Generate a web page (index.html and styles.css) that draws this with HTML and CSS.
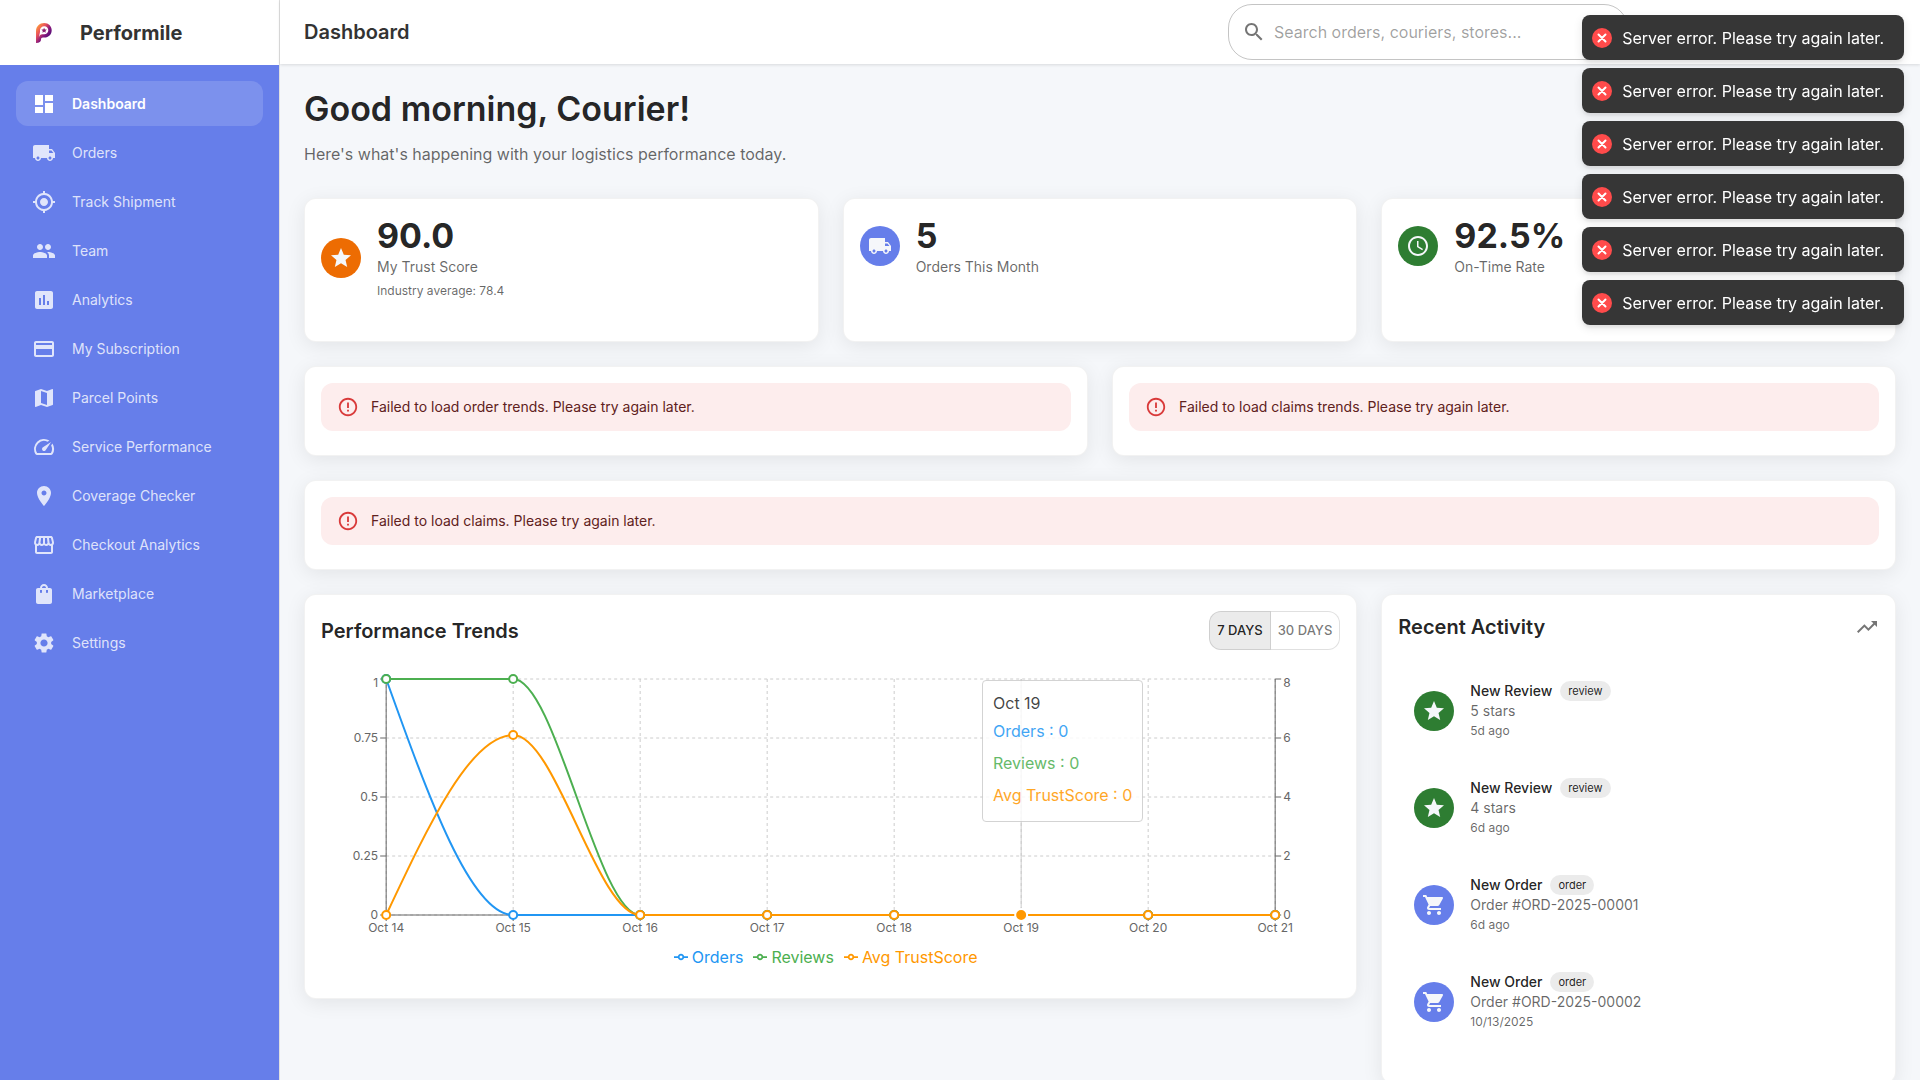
FILE: index.html
```html
<!DOCTYPE html>
<html lang="en">
<head>
<meta charset="utf-8">
<meta name="viewport" content="width=device-width, initial-scale=1">
<title>Performile</title>
<link rel="stylesheet" href="styles.css">
</head>
<body>
<svg class="sprite" aria-hidden="true">
  <symbol id="i-dashboard" viewBox="0 0 24 24"><path d="M3 13h8V3H3v10zm0 8h8v-6H3v6zm10 0h8V11h-8v10zm0-18v6h8V3h-8z"/></symbol>
  <symbol id="i-truck" viewBox="0 0 24 24"><path d="M20 8h-3V4H3c-1.1 0-2 .9-2 2v11h2c0 1.66 1.34 3 3 3s3-1.34 3-3h6c0 1.66 1.34 3 3 3s3-1.34 3-3h2v-5l-3-4zM6 18.5c-.83 0-1.5-.67-1.5-1.5s.67-1.5 1.5-1.5 1.5.67 1.5 1.5-.67 1.5-1.5 1.5zm13.5-9 1.96 2.5H17V9.5h2.5zm-1.5 9c-.83 0-1.5-.67-1.5-1.5s.67-1.5 1.5-1.5 1.5.67 1.5 1.5-.67 1.5-1.5 1.5z"/></symbol>
  <symbol id="i-locate" viewBox="0 0 24 24"><path d="M12 8c-2.21 0-4 1.79-4 4s1.79 4 4 4 4-1.79 4-4-1.79-4-4-4zm8.94 3c-.46-4.17-3.77-7.48-7.94-7.94V1h-2v2.06C6.83 3.52 3.52 6.83 3.06 11H1v2h2.06c.46 4.17 3.77 7.48 7.94 7.94V23h2v-2.06c4.17-.46 7.48-3.77 7.94-7.94H23v-2h-2.06zM12 19c-3.87 0-7-3.13-7-7s3.13-7 7-7 7 3.13 7 7-3.13 7-7 7z"/></symbol>
  <symbol id="i-people" viewBox="0 0 24 24"><path d="M16 11c1.66 0 2.99-1.34 2.99-3S17.66 5 16 5c-1.66 0-3 1.34-3 3s1.34 3 3 3zm-8 0c1.66 0 2.99-1.34 2.99-3S9.66 5 8 5C6.34 5 5 6.34 5 8s1.34 3 3 3zm0 2c-2.33 0-7 1.17-7 3.5V19h14v-2.5c0-2.33-4.67-3.5-7-3.5zm8 0c-.29 0-.62.02-.97.05 1.16.84 1.97 1.97 1.97 3.45V19h6v-2.5c0-2.33-4.67-3.5-7-3.5z"/></symbol>
  <symbol id="i-chart" viewBox="0 0 24 24"><path d="M19 3H5c-1.1 0-2 .9-2 2v14c0 1.1.9 2 2 2h14c1.1 0 2-.9 2-2V5c0-1.1-.9-2-2-2zM9 17H7v-7h2v7zm4 0h-2V7h2v10zm4 0h-2v-4h2v4z"/></symbol>
  <symbol id="i-card" viewBox="0 0 24 24"><path d="M20 4H4c-1.11 0-1.99.89-1.99 2L2 18c0 1.11.89 2 2 2h16c1.11 0 2-.89 2-2V6c0-1.11-.89-2-2-2zm0 14H4v-6h16v6zm0-10H4V6h16v2z"/></symbol>
  <symbol id="i-map" viewBox="0 0 24 24"><path d="m20.5 3-.16.03L15 5.1 9 3 3.36 4.9c-.21.07-.36.25-.36.48V20.5c0 .28.22.5.5.5l.16-.03L9 18.9l6 2.1 5.64-1.9c.21-.07.36-.25.36-.48V3.5c0-.28-.22-.5-.5-.5zM15 19l-6-2.11V5l6 2.11V19z"/></symbol>
  <symbol id="i-speed" viewBox="0 0 24 24"><path d="m20.38 8.57-1.23 1.85a8 8 0 0 1-.22 7.58H5.07A8 8 0 0 1 15.58 6.85l1.85-1.23A10 10 0 0 0 3.35 19a2 2 0 0 0 1.72 1h13.85a2 2 0 0 0 1.74-1 10 10 0 0 0-.27-10.44z"/><path d="M10.59 15.41a2 2 0 0 0 2.83 0l5.66-8.49-8.49 5.66a2 2 0 0 0 0 2.83z"/></symbol>
  <symbol id="i-pin" viewBox="0 0 24 24"><path d="M12 2C8.13 2 5 5.13 5 9c0 5.25 7 13 7 13s7-7.75 7-13c0-3.87-3.13-7-7-7zm0 9.5c-1.38 0-2.5-1.12-2.5-2.5s1.12-2.5 2.5-2.5 2.5 1.12 2.5 2.5-1.12 2.5-2.5 2.5z"/></symbol>
  <symbol id="i-store" viewBox="0 0 24 24"><path d="m21.9 8.89-1.05-4.37c-.22-.9-1-1.52-1.91-1.52H5.05c-.9 0-1.69.63-1.9 1.52L2.1 8.89c-.24 1.02-.02 2.06.62 2.88.08.11.19.19.28.29V19c0 1.1.9 2 2 2h14c1.1 0 2-.9 2-2v-6.94c.09-.09.2-.18.28-.28.64-.82.87-1.87.62-2.89zm-2.99-3.9 1.05 4.37c.1.42.01.84-.25 1.17-.14.18-.44.47-.94.47-.61 0-1.14-.49-1.21-1.14L16.98 5l1.93-.01zM13 5h1.96l.54 4.52c.05.39-.07.78-.33 1.07-.22.26-.54.41-.95.41-.67 0-1.22-.59-1.22-1.31V5zM8.49 9.52 9.04 5H11v4.69c0 .72-.55 1.31-1.29 1.31-.34 0-.65-.15-.89-.41-.25-.29-.37-.68-.33-1.07zm-4.45-.16L5.05 5h1.97l-.58 4.86c-.08.65-.6 1.14-1.21 1.14-.49 0-.8-.29-.93-.47-.27-.32-.36-.75-.26-1.17zM5 19v-6.03c.08.01.15.03.23.03.87 0 1.66-.36 2.24-.95.6.6 1.4.95 2.31.95.87 0 1.65-.36 2.23-.93.59.57 1.39.93 2.29.93.84 0 1.64-.35 2.24-.95.58.59 1.37.95 2.24.95.08 0 .15-.02.23-.03V19H5z"/></symbol>
  <symbol id="i-bag" viewBox="0 0 24 24"><path d="M18 6h-2c0-2.21-1.79-4-4-4S8 3.79 8 6H6c-1.1 0-2 .9-2 2v12c0 1.1.9 2 2 2h12c1.1 0 2-.9 2-2V8c0-1.1-.9-2-2-2zm-8 4c0 .55-.45 1-1 1s-1-.45-1-1V8h2v2zm2-6c1.1 0 2 .9 2 2h-4c0-1.1.9-2 2-2zm4 6c0 .55-.45 1-1 1s-1-.45-1-1V8h2v2z"/></symbol>
  <symbol id="i-gear" viewBox="0 0 24 24"><path d="M19.14 12.94c.04-.3.06-.61.06-.94 0-.32-.02-.64-.07-.94l2.03-1.58c.18-.14.23-.41.12-.61l-1.92-3.32c-.12-.22-.37-.29-.59-.22l-2.39.96c-.5-.38-1.03-.7-1.62-.94l-.36-2.54c-.04-.24-.24-.41-.48-.41h-3.84c-.24 0-.43.17-.47.41l-.36 2.54c-.59.24-1.13.57-1.62.94l-2.39-.96c-.22-.08-.47 0-.59.22L2.74 8.87c-.12.21-.08.47.12.61l2.03 1.58c-.05.3-.09.63-.09.94s.02.64.07.94l-2.03 1.58c-.18.14-.23.41-.12.61l1.92 3.32c.12.22.37.29.59.22l2.39-.96c.5.38 1.03.7 1.62.94l.36 2.54c.05.24.24.41.48.41h3.84c.24 0 .44-.17.47-.41l.36-2.54c.59-.24 1.13-.56 1.62-.94l2.39.96c.22.08.47 0 .59-.22l1.92-3.32c.12-.22.07-.47-.12-.61l-2.01-1.58zM12 15.6c-1.98 0-3.6-1.62-3.6-3.6s1.62-3.6 3.6-3.6 3.6 1.62 3.6 3.6-1.62 3.6-3.6 3.6z"/></symbol>
  <symbol id="i-search" viewBox="0 0 24 24"><path d="M15.5 14h-.79l-.28-.27C15.41 12.59 16 11.11 16 9.5 16 5.91 13.09 3 9.5 3S3 5.91 3 9.5 5.91 16 9.5 16c1.61 0 3.09-.59 4.23-1.57l.27.28v.79l5 4.99L20.49 19l-4.99-5zm-6 0C7.01 14 5 11.99 5 9.5S7.01 5 9.5 5 14 7.01 14 9.5 11.99 14 9.5 14z"/></symbol>
  <symbol id="i-star" viewBox="0 0 24 24"><path d="M12 17.27 18.18 21l-1.64-7.03L22 9.24l-7.19-.61L12 2 9.19 8.63 2 9.24l5.46 4.73L5.82 21z"/></symbol>
  <symbol id="i-clock" viewBox="0 0 24 24"><path d="M11.99 2C6.47 2 2 6.48 2 12s4.47 10 9.99 10C17.52 22 22 17.52 22 12S17.52 2 11.99 2zM12 20c-4.42 0-8-3.58-8-8s3.58-8 8-8 8 3.58 8 8-3.58 8-8 8z"/><path d="M12.5 7H11v6l5.25 3.15.75-1.23-4.5-2.67z"/></symbol>
  <symbol id="i-cart" viewBox="0 0 24 24"><path d="M7 18c-1.1 0-1.99.9-1.99 2S5.9 22 7 22s2-.9 2-2-.9-2-2-2zM1 2v2h2l3.6 7.59-1.35 2.45c-.16.28-.25.61-.25.96 0 1.1.9 2 2 2h12v-2H7.42c-.14 0-.25-.11-.25-.25l.03-.12.9-1.63h7.45c.75 0 1.41-.41 1.75-1.03l3.58-6.49c.08-.14.12-.31.12-.48 0-.55-.45-1-1-1H5.21l-.94-2H1zm16 16c-1.1 0-1.99.9-1.99 2s.89 2 1.99 2 2-.9 2-2-.9-2-2-2z"/></symbol>
  <symbol id="i-trend" viewBox="0 0 24 24"><path d="m16 6 2.29 2.29-4.88 4.88-4-4L2 16.59 3.41 18l6-6 4 4 6.3-6.29L22 12V6z"/></symbol>
  <symbol id="i-error" viewBox="0 0 24 24"><path d="M11 15h2v2h-2zm0-8h2v6h-2zm.99-5C6.47 2 2 6.48 2 12s4.47 10 9.99 10C17.52 22 22 17.52 22 12S17.52 2 11.99 2zM12 20c-4.42 0-8-3.58-8-8s3.58-8 8-8 8 3.58 8 8-3.58 8-8 8z"/></symbol>
  <symbol id="i-cross" viewBox="0 0 20 20"><circle cx="10" cy="10" r="10" fill="#ff4b4b"/><path d="M6.5 6.5l7 7M13.500 6.500l-7 7" fill="none" stroke="#fff" stroke-width="2" stroke-linecap="round"/></symbol>
  <symbol id="i-legend" viewBox="0 0 32 32"><path fill="none" stroke="currentColor" stroke-width="4" d="M0 16h10.67A5.33 5.33 0 1 1 21.33 16H32M21.33 16A5.33 5.33 0 1 1 10.67 16"/></symbol>
</svg>

<div class="app">
  <aside class="sidebar">
    <div class="brand">
      <svg class="brand-logo" viewBox="0 0 24 24" aria-hidden="true">
        <defs><linearGradient id="logo-fill" x1="0.1" y1="0.1" x2="0.8" y2="0.8">
          <stop offset="0" stop-color="#ff9a3c"/><stop offset="0.35" stop-color="#e8505b"/><stop offset="0.65" stop-color="#8a1a7c"/><stop offset="1" stop-color="#4a0a78"/>
        </linearGradient></defs>
        <path fill="url(#logo-fill)" d="M12.200 2C16.500 2 19.700 5.200 19.700 9.200c0 4.300-3.200 7.300-7.200 7.300H11c-1.300 0-2 .8-2 2C9 20.500 7.500 22 4 22V10.200C4 5.300 7.700 2 12.200 2z"/>
        <path fill="#fff" d="M12.300 5.300c2.400 0 4 1.800 4 4s-1.700 4-4 4h-2C8.500 13.300 7.700 14.400 6.700 16.500c.6-2 .9-3.300 1.300-5.400V9.300c0-2.200 1.900-4 4.300-4z"/>
        <path fill="#8a1a6c" d="m12.100 6.700.8 1.700 1.900.2-1.400 1.300.4 1.900-1.700-1-1.700 1 .4-1.900-1.400-1.300 1.900-.2z"/>
      </svg>
      <span class="brand-name">Performile</span>
    </div>
    <nav class="nav" aria-label="Main">
      <a class="nav-item is-active" href="#dashboard"><svg class="icon"><use href="#i-dashboard"/></svg>Dashboard</a>
      <a class="nav-item" href="#orders"><svg class="icon"><use href="#i-truck"/></svg>Orders</a>
      <a class="nav-item" href="#track"><svg class="icon"><use href="#i-locate"/></svg>Track Shipment</a>
      <a class="nav-item" href="#team"><svg class="icon"><use href="#i-people"/></svg>Team</a>
      <a class="nav-item" href="#analytics"><svg class="icon"><use href="#i-chart"/></svg>Analytics</a>
      <a class="nav-item" href="#subscription"><svg class="icon"><use href="#i-card"/></svg>My Subscription</a>
      <a class="nav-item" href="#parcel-points"><svg class="icon"><use href="#i-map"/></svg>Parcel Points</a>
      <a class="nav-item" href="#service"><svg class="icon"><use href="#i-speed"/></svg>Service Performance</a>
      <a class="nav-item" href="#coverage"><svg class="icon"><use href="#i-pin"/></svg>Coverage Checker</a>
      <a class="nav-item" href="#checkout"><svg class="icon"><use href="#i-store"/></svg>Checkout Analytics</a>
      <a class="nav-item" href="#marketplace"><svg class="icon"><use href="#i-bag"/></svg>Marketplace</a>
      <a class="nav-item" href="#settings"><svg class="icon"><use href="#i-gear"/></svg>Settings</a>
    </nav>
  </aside>

  <div class="page">
    <header class="topbar">
      <div class="topbar-title">Dashboard</div>
      <label class="search">
        <svg class="icon"><use href="#i-search"/></svg>
        <input class="search-input" type="search" placeholder="Search orders, couriers, stores..." aria-label="Search">
      </label>
    </header>

    <main class="content">
      <div class="greeting">
        <h1 class="greeting-title">Good morning, Courier!</h1>
        <p class="greeting-text">Here's what's happening with your logistics performance today.</p>
      </div>

      <div class="grid">
        <section class="card stat">
          <div class="stat-row">
            <span class="avatar avatar-orange"><svg class="icon"><use href="#i-star"/></svg></span>
            <div>
              <div class="stat-value">90.0</div>
              <div class="stat-label">My Trust Score</div>
              <div class="stat-note">Industry average: 78.4</div>
            </div>
          </div>
        </section>
        <section class="card stat">
          <div class="stat-row">
            <span class="avatar avatar-blue"><svg class="icon"><use href="#i-truck"/></svg></span>
            <div>
              <div class="stat-value">5</div>
              <div class="stat-label">Orders This Month</div>
            </div>
          </div>
        </section>
        <section class="card stat">
          <div class="stat-row">
            <span class="avatar avatar-green"><svg class="icon"><use href="#i-clock"/></svg></span>
            <div>
              <div class="stat-value">92.5%</div>
              <div class="stat-label">On-Time Rate</div>
            </div>
          </div>
        </section>
      </div>

      <div class="grid grid-halves">
        <section class="card"><div class="alert" role="alert"><svg class="alert-icon"><use href="#i-error"/></svg>Failed to load order trends. Please try again later.</div></section>
        <section class="card"><div class="alert" role="alert"><svg class="alert-icon"><use href="#i-error"/></svg>Failed to load claims trends. Please try again later.</div></section>
      </div>

      <section class="card"><div class="alert" role="alert"><svg class="alert-icon"><use href="#i-error"/></svg>Failed to load claims. Please try again later.</div></section>

      <div class="grid grid-bottom">
        <section class="card trends">
          <div class="trends-head">
            <h2 class="card-title">Performance Trends</h2>
            <div class="toggle" role="group" aria-label="Period">
              <button class="toggle-btn is-selected" type="button" aria-pressed="true">7 DAYS</button>
              <button class="toggle-btn" type="button" aria-pressed="false">30 DAYS</button>
            </div>
          </div>
          <div class="chart">
            <svg class="chart-plot" viewBox="0 0 1019 271" role="img" aria-label="Performance trends">
              <path class="grid-line" d="M65 5H954M65 64H954M65 123H954M65 182H954M65 241H954"/>
              <path class="grid-line" d="M65 5V241M192 5V241M319 5V241M446 5V241M573 5V241M700 5V241M827 5V241M954 5V241"/>
              <path class="axis" d="M65 241H954M65 241v6M192 241v6M319 241v6M446 241v6M573 241v6M700 241v6M827 241v6M954 241v6"/>
              <path class="axis" d="M65 5V241M59 5h6M59 64h6M59 123h6M59 182h6M59 241h6"/>
              <path class="axis" d="M954 5V241M954 5h6M954 64h6M954 123h6M954 182h6M954 241h6"/>
              <g class="tick tick-end">
                <text x="57" y="13">1</text><text x="57" y="68">0.75</text><text x="57" y="127">0.5</text><text x="57" y="186">0.25</text><text x="57" y="245">0</text>
              </g>
              <g class="tick">
                <text x="962" y="13">8</text><text x="962" y="68">6</text><text x="962" y="127">4</text><text x="962" y="186">2</text><text x="962" y="245">0</text>
              </g>
              <g class="tick tick-middle">
                <text x="65" y="258">Oct 14</text><text x="192" y="258">Oct 15</text><text x="319" y="258">Oct 16</text><text x="446" y="258">Oct 17</text><text x="573" y="258">Oct 18</text><text x="700" y="258">Oct 19</text><text x="827" y="258">Oct 20</text><text x="954" y="258">Oct 21</text>
              </g>
              <path class="cursor" d="M700 5V241"/>
              <g class="series series-orders">
                <path d="M65 5C107.300 123 149.700 241 192 241H954"/>
                <circle cx="65" cy="5" r="4"/><circle cx="192" cy="241" r="4"/><circle cx="319" cy="241" r="4"/><circle cx="446" cy="241" r="4"/><circle cx="573" cy="241" r="4"/><circle cx="827" cy="241" r="4"/><circle cx="954" cy="241" r="4"/>
              </g>
              <g class="series series-reviews">
                <path d="M65 5H192C234.300 5 276.700 241 319 241H954"/>
                <circle cx="65" cy="5" r="4"/><circle cx="192" cy="5" r="4"/><circle cx="319" cy="241" r="4"/><circle cx="446" cy="241" r="4"/><circle cx="573" cy="241" r="4"/><circle cx="827" cy="241" r="4"/><circle cx="954" cy="241" r="4"/>
              </g>
              <g class="series series-trust">
                <path d="M65 241C107.300 151 149.700 61 192 61C234.300 61 276.700 241 319 241H954"/>
                <circle cx="65" cy="241" r="4"/><circle cx="192" cy="61" r="4"/><circle cx="319" cy="241" r="4"/><circle cx="446" cy="241" r="4"/><circle cx="573" cy="241" r="4"/><circle cx="827" cy="241" r="4"/><circle cx="954" cy="241" r="4"/>
              </g>
              <circle class="active-dot" cx="700" cy="241" r="6"/>
            </svg>
            <ul class="legend">
              <li class="legend-item color-orders"><svg class="legend-icon"><use href="#i-legend"/></svg>Orders</li>
              <li class="legend-item color-reviews"><svg class="legend-icon"><use href="#i-legend"/></svg>Reviews</li>
              <li class="legend-item color-trust"><svg class="legend-icon"><use href="#i-legend"/></svg>Avg TrustScore</li>
            </ul>
            <div class="tooltip" role="tooltip">
              <p class="tooltip-label">Oct 19</p>
              <ul class="tooltip-list">
                <li class="tooltip-item color-orders">Orders : 0</li>
                <li class="tooltip-item color-reviews">Reviews : 0</li>
                <li class="tooltip-item color-trust">Avg TrustScore : 0</li>
              </ul>
            </div>
          </div>
        </section>

        <section class="card activity">
          <div class="activity-head">
            <h2 class="card-title">Recent Activity</h2>
            <svg class="icon"><use href="#i-trend"/></svg>
          </div>
          <ul class="activity-list">
            <li class="activity-item">
              <span class="avatar avatar-green"><svg class="icon"><use href="#i-star"/></svg></span>
              <div>
                <div class="activity-title">New Review<span class="chip">review</span></div>
                <div class="activity-text">5 stars</div>
                <div class="activity-time">5d ago</div>
              </div>
            </li>
            <li class="activity-item">
              <span class="avatar avatar-green"><svg class="icon"><use href="#i-star"/></svg></span>
              <div>
                <div class="activity-title">New Review<span class="chip">review</span></div>
                <div class="activity-text">4 stars</div>
                <div class="activity-time">6d ago</div>
              </div>
            </li>
            <li class="activity-item">
              <span class="avatar avatar-blue"><svg class="icon"><use href="#i-cart"/></svg></span>
              <div>
                <div class="activity-title">New Order<span class="chip">order</span></div>
                <div class="activity-text">Order #ORD-2025-00001</div>
                <div class="activity-time">6d ago</div>
              </div>
            </li>
            <li class="activity-item">
              <span class="avatar avatar-blue"><svg class="icon"><use href="#i-cart"/></svg></span>
              <div>
                <div class="activity-title">New Order<span class="chip">order</span></div>
                <div class="activity-text">Order #ORD-2025-00002</div>
                <div class="activity-time">10/13/2025</div>
              </div>
            </li>
          </ul>
        </section>
      </div>
    </main>
  </div>
</div>

<div class="toasts" aria-live="polite">
  <div class="toast"><svg class="toast-icon"><use href="#i-cross"/></svg>Server error. Please try again later.</div>
  <div class="toast"><svg class="toast-icon"><use href="#i-cross"/></svg>Server error. Please try again later.</div>
  <div class="toast"><svg class="toast-icon"><use href="#i-cross"/></svg>Server error. Please try again later.</div>
  <div class="toast"><svg class="toast-icon"><use href="#i-cross"/></svg>Server error. Please try again later.</div>
  <div class="toast"><svg class="toast-icon"><use href="#i-cross"/></svg>Server error. Please try again later.</div>
  <div class="toast"><svg class="toast-icon"><use href="#i-cross"/></svg>Server error. Please try again later.</div>
</div>
</body>
</html>
```

FILE: styles.css
```css
:root {
  --primary: #667eea;
  --surface: #f5f7fa;
  --text: rgba(0, 0, 0, 0.87);
  --muted: rgba(0, 0, 0, 0.6);
  --orders: #2196f3;
  --reviews: #4caf50;
  --trust: #ff9800;
}

* { box-sizing: border-box; }

html { scrollbar-width: none; }

body {
  margin: 0;
  background: var(--surface);
  color: var(--text);
  font: 400 16px/24px Inter, "Liberation Sans", sans-serif;
}

h1, h2, p, ul { margin: 0; padding: 0; }
ul { list-style: none; }

.sprite { display: none; }

.icon {
  flex: none;
  width: 24px;
  height: 24px;
  fill: currentColor;
}

.app { display: flex; min-height: 100vh; }

/* Sidebar */
.sidebar {
  position: sticky;
  top: 0;
  flex: none;
  width: 280px;
  height: 100vh;
  background: var(--primary);
  border-right: 1px solid #e0e0e0;
}

.brand {
  display: flex;
  align-items: center;
  gap: 24px;
  height: 65px;
  padding: 0 32px;
  background: #fff;
  color: #333;
}

.brand-logo { width: 24px; height: 24px; }
.brand-name { font-size: 20px; font-weight: 700; }

.nav {
  display: flex;
  flex-direction: column;
  gap: 4px;
  padding: 16px;
}

.nav-item {
  display: flex;
  align-items: center;
  gap: 16px;
  height: 45px;
  padding: 0 16px;
  border-radius: 12px;
  color: rgba(255, 255, 255, 0.8);
  font-size: 14px;
  text-decoration: none;
}

.nav-item.is-active {
  background: rgba(255, 255, 255, 0.15);
  color: #fff;
  font-weight: 600;
}

/* Top bar */
.page { flex: 1; min-width: 0; }

.topbar {
  position: relative;
  display: flex;
  align-items: center;
  justify-content: space-between;
  height: 64px;
  padding: 0 292px 0 24px;
  background: #fff;
  box-shadow: 0 1px 3px rgba(0, 0, 0, 0.12);
}

.topbar-title { color: #333; font-size: 20px; font-weight: 600; }

.search {
  display: flex;
  align-items: center;
  gap: 8px;
  width: 400px;
  height: 56px;
  padding: 0 13px;
  border: 1px solid rgba(0, 0, 0, 0.23);
  border-radius: 24px;
  color: rgba(0, 0, 0, 0.54);
}

.search-input {
  flex: 1;
  min-width: 0;
  padding: 0;
  border: 0;
  outline: 0;
  background: none;
  color: var(--text);
  font: inherit;
}

.search-input::placeholder { color: rgba(0, 0, 0, 0.38); }

/* Content */
.content {
  display: flex;
  flex-direction: column;
  gap: 24px;
  padding: 24px;
}

.greeting { padding-bottom: 8px; }
.greeting-title { margin-bottom: 12px; font-size: 34px; line-height: 42px; font-weight: 600; }
.greeting-text { color: var(--muted); }

.grid {
  display: grid;
  grid-template-columns: repeat(3, minmax(0, 1fr));
  gap: 24px;
}

.grid-halves { grid-template-columns: repeat(2, minmax(0, 1fr)); }
.grid-bottom { align-items: start; }

.card {
  padding: 16px 16px 24px;
  background: #fff;
  border: 1px solid rgba(0, 0, 0, 0.05);
  border-radius: 12px;
  box-shadow: 0 4px 20px rgba(0, 0, 0, 0.08);
}

.card-title { font-size: 20px; line-height: 32px; font-weight: 600; }

.avatar {
  display: flex;
  flex: none;
  align-items: center;
  justify-content: center;
  width: 40px;
  height: 40px;
  border-radius: 50%;
  color: var(--surface);
}

.avatar-orange { background: #ed6c02; }
.avatar-blue { background: var(--primary); }
.avatar-green { background: #2e7d32; }

/* Stat cards */
.stat { padding-bottom: 40px; }
.stat-row { display: flex; align-items: center; gap: 16px; }
.stat-value { font-size: 34px; line-height: 42px; font-weight: 700; }
.stat-label { color: var(--muted); font-size: 14px; line-height: 20px; }
.stat-note { margin-top: 4px; color: var(--muted); font-size: 12px; line-height: 20px; }

/* Alerts */
.alert {
  display: flex;
  align-items: center;
  gap: 12px;
  height: 48px;
  padding: 0 16px;
  border-radius: 12px;
  background: #fdeded;
  color: #5f2120;
  font-size: 14px;
}

.alert-icon { width: 22px; height: 22px; fill: #d93a3a; }

/* Performance chart */
.trends { grid-column: span 2; }

.trends-head {
  display: flex;
  align-items: center;
  justify-content: space-between;
  margin-bottom: 24px;
}

.toggle { display: flex; }

.toggle-btn {
  height: 39px;
  padding: 0 7px;
  border: 1px solid rgba(0, 0, 0, 0.12);
  border-radius: 12px 0 0 12px;
  background: none;
  color: rgba(0, 0, 0, 0.54);
  font: 500 13px/23px Inter, "Liberation Sans", sans-serif;
}

.toggle-btn + .toggle-btn { border-left: 0; border-radius: 0 12px 12px 0; }
.toggle-btn.is-selected { background: rgba(0, 0, 0, 0.08); color: var(--text); }

.chart { position: relative; padding-bottom: 5px; }
.chart-plot { display: block; width: 100%; height: 271px; }

.grid-line { fill: none; stroke: #ccc; stroke-dasharray: 3 3; }
.axis { fill: none; stroke: #666; }
.cursor { stroke: #ccc; }

.tick { fill: #666; font-size: 12px; }
.tick-end { text-anchor: end; }
.tick-middle { text-anchor: middle; }

.series { stroke-width: 2; }
.series path { fill: none; }
.series circle { fill: #fff; }
.series-orders { stroke: var(--orders); }
.series-reviews { stroke: var(--reviews); }
.series-trust { stroke: var(--trust); }
.active-dot { fill: var(--trust); stroke: #fff; stroke-width: 2; }

.color-orders { color: var(--orders); }
.color-reviews { color: var(--reviews); }
.color-trust { color: var(--trust); }

.legend { display: flex; justify-content: center; }
.legend-item { display: flex; align-items: center; gap: 4px; margin-right: 10px; }
.legend-icon { width: 14px; height: 14px; }

.tooltip {
  position: absolute;
  top: 6px;
  left: 661px;
  padding: 10px;
  border: 1px solid #ccc;
  border-radius: 4px;
  background: #fff;
  opacity: 0.85;
  white-space: nowrap;
}

.tooltip-item { padding: 4px 0; }

/* Recent activity */
.activity-head {
  display: flex;
  align-items: center;
  justify-content: space-between;
  margin-bottom: 20px;
}

.activity-head .icon { color: rgba(0, 0, 0, 0.54); }

.activity-list { padding-bottom: 8px; }

.activity-item {
  display: flex;
  align-items: center;
  gap: 16px;
  padding: 18px 16px 19px;
}

.activity-title {
  display: flex;
  align-items: center;
  gap: 8px;
  font-size: 14px;
  line-height: 20px;
  font-weight: 500;
}

.activity-text { color: var(--muted); font-size: 14px; line-height: 20px; }
.activity-time { color: var(--muted); font-size: 12px; line-height: 20px; }

.chip {
  padding: 0 8px;
  border-radius: 10px;
  background: rgba(0, 0, 0, 0.08);
  font-size: 11px;
  font-weight: 400;
}

/* Toast notifications */
.toasts {
  position: fixed;
  top: 15px;
  right: 16px;
  display: flex;
  flex-direction: column;
  gap: 8px;
}

.toast {
  display: flex;
  align-items: center;
  gap: 10px;
  height: 45px;
  padding: 0 20px 0 10px;
  border-radius: 8px;
  background: #363636;
  color: #fff;
  box-shadow: 0 3px 10px rgba(0, 0, 0, 0.1), 0 3px 3px rgba(0, 0, 0, 0.05);
}

.toast-icon { flex: none; width: 20px; height: 20px; }
```
